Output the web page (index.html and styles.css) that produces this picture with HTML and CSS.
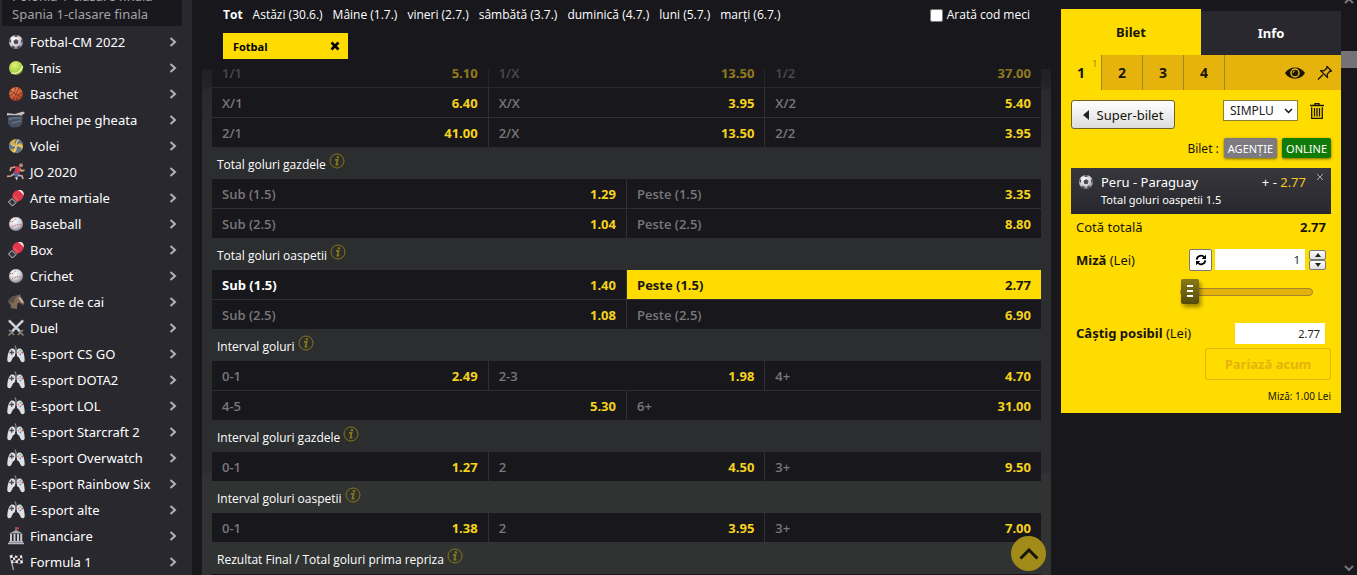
FILE: index.html
```html
<!DOCTYPE html>
<html lang="ro">
<head>
<meta charset="utf-8">
<meta name="viewport" content="width=device-width, initial-scale=1">
<title>Pariuri sportive</title>
<link rel="stylesheet" href="styles.css">
</head>
<body>
<svg class="defs" aria-hidden="true">
  <defs>
    <radialGradient id="gWhite" cx="40%" cy="30%" r="75%"><stop offset="0" stop-color="#fff"/><stop offset=".6" stop-color="#cfcdd4"/><stop offset="1" stop-color="#77757f"/></radialGradient>
    <radialGradient id="gGreen" cx="40%" cy="30%" r="75%"><stop offset="0" stop-color="#e2f27a"/><stop offset=".7" stop-color="#a5cf3e"/><stop offset="1" stop-color="#6c9424"/></radialGradient>
    <radialGradient id="gOrange" cx="40%" cy="30%" r="75%"><stop offset="0" stop-color="#ef8a5a"/><stop offset=".7" stop-color="#c95331"/><stop offset="1" stop-color="#84301d"/></radialGradient>
    <symbol id="football" viewBox="0 0 18 18"><circle cx="9" cy="9" r="7" fill="url(#gWhite)"/><path d="M9 6l2.600 1.900-1 3.100H7.400l-1-3.100zM6 2.900L9 2.100l3 .8L9 4zM2.100 8.600l.9-3 1.200 2-.7 2.600zM15.900 8.600L15 5.600l-1.200 2 .7 2.600zM4.800 14.600l.7-2 2.300 1.400v1.700zM13.200 14.600l-.7-2-2.300 1.400v1.700z" fill="#4a4957"/></symbol>
    <symbol id="tennis" viewBox="0 0 18 18"><circle cx="9" cy="9" r="7" fill="url(#gGreen)"/><path d="M4 14c6 1.400 10.500-1.800 11.700-7" fill="none" stroke="#f0fbb8" stroke-width="1.200"/></symbol>
    <symbol id="basket" viewBox="0 0 18 18"><circle cx="9" cy="9" r="7" fill="url(#gOrange)"/><path d="M3 5.600l12 7M12 2.700L6 15.300M2.200 10.500c4-.5 6.500-3 6-8.300M15.700 8c-4 .3-6.500 3-5.800 7.700" fill="none" stroke="#6e2c1c" stroke-width=".8"/></symbol>
    <symbol id="hockey" viewBox="0 0 18 18"><path d="M1 5l8-1 7 1-1 8-3 3-7 .5-4-3.500z" fill="#465060"/><path d="M2 8.500c4-2 8-2 12-1M5 12l9-2" stroke="#657082" stroke-width="1.500" fill="none"/><path d="M0 2l8 1L16 .5 18 2l-3.500 2.500L0 4.500z" fill="#c4c0bd"/><path d="M1 5h12" stroke="#25272c"/></symbol>
    <symbol id="volley" viewBox="0 0 18 18"><circle cx="9" cy="9" r="7" fill="#dcae40"/><path d="M9 9C7 6 7.500 3.500 10 2c3 .3 5 2 6 5-3-1.500-5-.8-7 2zM9 9c3.500-.5 5 1 5.500 4-2 2.500-4.500 3.300-7 2.800C9.500 14 10 12 9 9zM9 9c-1.500 3-3.500 3.500-6 3.200C1.500 9.500 2 6.500 4 4.200 4 7 5.800 8.500 9 9z" fill="#5f7694"/><path d="M9 9c0-3 .5-5 3-6M9 9c3-1 5-.5 6.500 1.500M9 9c.5 3-.5 5-3 6M9 9C6 9 4 8 3.500 5.500" fill="none" stroke="#f1d377" stroke-width="1.200"/></symbol>
    <symbol id="runner" viewBox="0 0 18 18"><circle cx="14" cy="2.300" r="2" fill="#b88470"/><path d="M7 3l6 1 1.500 3-3 4-5-1 2-4z" fill="#d23e48"/><path d="M6 9.500l6 1 1 3-3 1-4-3z" fill="#3f6db0"/><path d="M8 4L4 5 3 8M13 6l2 2 2.500-1M7 11l-3 2-4 .3M11 12l4 1 1 3" fill="none" stroke="#d6a48e" stroke-width="1.700"/><path d="M8 14l3 .5-1.500 3z" fill="#dedde2"/></symbol>
    <symbol id="glove" viewBox="0 0 18 18"><path d="M5.500 7.500C5 4 8 1.500 11.500 1c4-.4 6 3 5 6-1 4-4.500 5.500-7 5.500z" fill="#e1374a"/><path d="M11 1.200c4.500-1 6.500 2 5.500 5.300-1.500-2.500-3-4-5.500-5.300z" fill="#f6e9e9"/><path d="M5.500 8l2-2 4.500 5-2 2z" fill="#ea4c5b"/><path d="M5 9.500l4 4L5.500 17 1.500 13z" fill="#34333b" stroke="#d6d5d9" stroke-width="1"/></symbol>
    <symbol id="baseball" viewBox="0 0 18 18"><circle cx="9" cy="9" r="7" fill="url(#gWhite)"/><path d="M3 6.500c3 .5 5-.5 6-4M3.500 13c4-3 8-4 12-3" fill="none" stroke="#b8646f" stroke-width="1" stroke-dasharray="1 .8"/></symbol>
    <symbol id="horse" viewBox="0 0 18 18"><path d="M1 9c1.500-4.500 5-6.500 10-6.500L13 1l.5 2.500c2 1.500 2.500 4 4 6.500l-1.500 2-4-2.500c-2 1-2 3-2 6.500l-6.500-1C4.500 13 4 11 1 9z" fill="#806a58"/><path d="M1 9c1.500-4.500 5-6.500 10-6.500-3 2-4 4-4 7.500z" fill="#5a4d45"/><path d="M12 4.500l4 5" stroke="#d5cbc2" stroke-width="1.300"/></symbol>
    <symbol id="swords" viewBox="0 0 18 18"><path d="M2 1.500l11 11M16 1.500l-11 11" stroke="#aeb5c2" stroke-width="2.600"/><path d="M2 1.500l11 11M16 1.500l-11 11" stroke="#eef1f6" stroke-width="1"/><path d="M2 11l5 5M16 11l-5 5M1.500 16.500l3-3M16.500 16.500l-3-3" stroke="#8d8278" stroke-width="1.700"/></symbol>
    <symbol id="pad" viewBox="0 0 18 18"><path d="M9 5V3l-1-2.500" stroke="#8b8a92" fill="none" stroke-width="1.200"/><path d="M7 5h4v4H7z" fill="#5c5b64"/><path d="M4.500 3.500c2.500-.5 4 1 3.800 3.500L8 11l-2 1.500L4 16.500c-1.500 1.500-4 .5-3.700-2C.6 10 1.500 5 4.500 3.500zM13.500 3.500c-2.500-.5-4 1-3.800 3.500L10 11l2 1.500 2 4c1.500 1.500 4 .5 3.700-2C17.400 10 16.500 5 13.500 3.500z" fill="#dfe0e6"/><path d="M4.700 5.300v4.400M2.500 7.500h4.400" stroke="#4a4954" stroke-width="1.300"/><circle cx="13.300" cy="5.600" r=".9" fill="#5eb388"/><circle cx="15.200" cy="7.500" r=".9" fill="#d85252"/><circle cx="11.400" cy="7.500" r=".9" fill="#d78a9a"/><circle cx="13.300" cy="9.400" r=".9" fill="#5d91c6"/></symbol>
    <symbol id="bank" viewBox="0 0 18 18"><path d="M9 0v4" stroke="#999"/><path d="M9 .3h3v2H9z" fill="#c8434b"/><path d="M9 3l7 3.500H2z" fill="#a6a9b2"/><path d="M3 7h2v7H3zM6.500 7h2v7h-2zM10 7h2v7h-2zM13.200 7h2v7h-2z" fill="#c6c8cf"/><path d="M2 14h14v1.500H2zM1 15.800h16v1.500H1z" fill="#b4b6bf"/></symbol>
    <symbol id="flag" viewBox="0 0 18 18"><path d="M3 2.500L6.500 17" stroke="#aaa9b0" stroke-width="1.300"/><path d="M3 2.500C6 0 9 5 15 2l1 8c-5 2-7-2-11.500.5z" fill="#e6e5ea"/><path d="M5.500 2h2.400v2.500H5.500zM10.500 3H13v2.500h-2.500zM3.700 5h2.400v2.300H3.700zM8.200 4.800h2.400v2.500H8.200zM13 5.300h2.300v2H13zM6.200 7.300h2.300v2H6.200zM11 7.500h2.300v2.800H11z" fill="#222127"/></symbol>
    <symbol id="chev" viewBox="0 0 8 10"><path d="M1.500 1L6 5 1.500 9" fill="none" stroke="currentColor" stroke-width="2"/></symbol>
    <symbol id="info" viewBox="0 0 16 16"><circle cx="8" cy="8" r="7" fill="none" stroke="currentColor" stroke-width="1"/><circle cx="8.900" cy="4.300" r="1.200" fill="currentColor"/><path d="M6 6.900h2.600L7.400 11.600h2" fill="none" stroke="currentColor" stroke-width="1.700"/></symbol>
  </defs>
</svg>
<div class="page">
  <nav class="sidebar" aria-label="Sporturi">
    <div class="submenu"><a href="#">Polonia 1-clasare finala</a><a href="#">Spania 1-clasare finala</a></div>
    <a class="sport" href="#"><svg><use href="#football"/></svg><span>Fotbal-CM 2022</span><svg class="chev"><use href="#chev"/></svg></a>
    <a class="sport" href="#"><svg><use href="#tennis"/></svg><span>Tenis</span><svg class="chev"><use href="#chev"/></svg></a>
    <a class="sport" href="#"><svg><use href="#basket"/></svg><span>Baschet</span><svg class="chev"><use href="#chev"/></svg></a>
    <a class="sport" href="#"><svg><use href="#hockey"/></svg><span>Hochei pe gheata</span><svg class="chev"><use href="#chev"/></svg></a>
    <a class="sport" href="#"><svg><use href="#volley"/></svg><span>Volei</span><svg class="chev"><use href="#chev"/></svg></a>
    <a class="sport" href="#"><svg><use href="#runner"/></svg><span>JO 2020</span><svg class="chev"><use href="#chev"/></svg></a>
    <a class="sport" href="#"><svg><use href="#glove"/></svg><span>Arte martiale</span><svg class="chev"><use href="#chev"/></svg></a>
    <a class="sport" href="#"><svg><use href="#baseball"/></svg><span>Baseball</span><svg class="chev"><use href="#chev"/></svg></a>
    <a class="sport" href="#"><svg><use href="#glove"/></svg><span>Box</span><svg class="chev"><use href="#chev"/></svg></a>
    <a class="sport" href="#"><svg><use href="#baseball"/></svg><span>Crichet</span><svg class="chev"><use href="#chev"/></svg></a>
    <a class="sport" href="#"><svg><use href="#horse"/></svg><span>Curse de cai</span><svg class="chev"><use href="#chev"/></svg></a>
    <a class="sport" href="#"><svg><use href="#swords"/></svg><span>Duel</span><svg class="chev"><use href="#chev"/></svg></a>
    <a class="sport" href="#"><svg><use href="#pad"/></svg><span>E-sport CS GO</span><svg class="chev"><use href="#chev"/></svg></a>
    <a class="sport" href="#"><svg><use href="#pad"/></svg><span>E-sport DOTA2</span><svg class="chev"><use href="#chev"/></svg></a>
    <a class="sport" href="#"><svg><use href="#pad"/></svg><span>E-sport LOL</span><svg class="chev"><use href="#chev"/></svg></a>
    <a class="sport" href="#"><svg><use href="#pad"/></svg><span>E-sport Starcraft 2</span><svg class="chev"><use href="#chev"/></svg></a>
    <a class="sport" href="#"><svg><use href="#pad"/></svg><span>E-sport Overwatch</span><svg class="chev"><use href="#chev"/></svg></a>
    <a class="sport" href="#"><svg><use href="#pad"/></svg><span>E-sport Rainbow Six</span><svg class="chev"><use href="#chev"/></svg></a>
    <a class="sport" href="#"><svg><use href="#pad"/></svg><span>E-sport alte</span><svg class="chev"><use href="#chev"/></svg></a>
    <a class="sport" href="#"><svg><use href="#bank"/></svg><span>Financiare</span><svg class="chev"><use href="#chev"/></svg></a>
    <a class="sport" href="#"><svg><use href="#flag"/></svg><span>Formula 1</span><svg class="chev"><use href="#chev"/></svg></a>
  </nav>

  <main class="offer">
    <header class="filters">
      <div class="days">
        <a class="on" href="#">Tot</a><a href="#">Astăzi (30.6.)</a><a href="#">Mâine (1.7.)</a><a href="#">vineri (2.7.)</a><a href="#">sâmbătă (3.7.)</a><a href="#">duminică (4.7.)</a><a href="#">luni (5.7.)</a><a href="#">marți (6.7.)</a>
        <label class="code"><input type="checkbox">Arată cod meci</label>
      </div>
      <button class="chip" type="button">Fotbal<svg viewBox="0 0 10 10"><path d="M1.500 1.500l7 7M8.500 1.500l-7 7" stroke="#000" stroke-width="2.600"/></svg></button>
    </header>
    <div class="list">
      <div class="content">
        <div class="odds three">
          <button><span>1/1</span><b>5.10</b></button><button><span>1/X</span><b>13.50</b></button><button><span>1/2</span><b>37.00</b></button>
          <button><span>X/1</span><b>6.40</b></button><button><span>X/X</span><b>3.95</b></button><button><span>X/2</span><b>5.40</b></button>
          <button><span>2/1</span><b>41.00</b></button><button><span>2/X</span><b>13.50</b></button><button><span>2/2</span><b>3.95</b></button>
        </div>
        <h3>Total goluri gazdele<svg><use href="#info"/></svg></h3>
        <div class="odds two">
          <button><span>Sub (1.5)</span><b>1.29</b></button><button><span>Peste (1.5)</span><b>3.35</b></button>
          <button><span>Sub (2.5)</span><b>1.04</b></button><button><span>Peste (2.5)</span><b>8.80</b></button>
        </div>
        <h3>Total goluri oaspetii<svg><use href="#info"/></svg></h3>
        <div class="odds two">
          <button class="active"><span>Sub (1.5)</span><b>1.40</b></button><button class="picked"><span>Peste (1.5)</span><b>2.77</b></button>
          <button><span>Sub (2.5)</span><b>1.08</b></button><button><span>Peste (2.5)</span><b>6.90</b></button>
        </div>
        <h3>Interval goluri<svg><use href="#info"/></svg></h3>
        <div class="odds three">
          <button><span>0-1</span><b>2.49</b></button><button><span>2-3</span><b>1.98</b></button><button><span>4+</span><b>4.70</b></button>
        </div>
        <div class="odds two next">
          <button><span>4-5</span><b>5.30</b></button><button><span>6+</span><b>31.00</b></button>
        </div>
        <h3>Interval goluri gazdele<svg><use href="#info"/></svg></h3>
        <div class="odds three">
          <button><span>0-1</span><b>1.27</b></button><button><span>2</span><b>4.50</b></button><button><span>3+</span><b>9.50</b></button>
        </div>
        <h3>Interval goluri oaspetii<svg><use href="#info"/></svg></h3>
        <div class="odds three">
          <button><span>0-1</span><b>1.38</b></button><button><span>2</span><b>3.95</b></button><button><span>3+</span><b>7.00</b></button>
        </div>
        <h3>Rezultat Final / Total goluri prima repriza<svg><use href="#info"/></svg></h3>
        <div class="odds three"></div>
      </div>
      <button class="totop" type="button" aria-label="Sus"><svg viewBox="0 0 20 12"><path d="M1.500 10.500L10 2l8.500 8.500" fill="none" stroke="#17160c" stroke-width="3"/></svg></button>
    </div>
  </main>

  <aside class="side">
    <div class="tabs"><button class="tab on" type="button">Bilet</button><button class="tab" type="button">Info</button></div>
    <div class="slips">
      <button class="slip on" type="button">1<sup>1</sup></button><button class="slip" type="button">2</button><button class="slip" type="button">3</button><button class="slip" type="button">4</button>
      <div class="tools">
        <button class="icon" type="button" aria-label="Vezi"><svg class="eye" viewBox="0 0 20 12"><path d="M0 6C4-1.500 16-1.500 20 6 16 13.500 4 13.500 0 6z" fill="#1a1508"/><circle cx="10" cy="6" r="4" fill="none" stroke="#e6b20c" stroke-width="1.500"/><path d="M8 6a2 2 0 0 1 2-2" fill="none" stroke="#e6b20c"/></svg></button>
        <button class="icon" type="button" aria-label="Fixează"><svg class="pin" viewBox="0 0 16 16"><path d="M10 1.500L14.500 6l-2 .5-2.300 2.600.3 3.400L3.500 5.600l3.400.2 2.700-2.300zM6 9.500L1 14.500" fill="none" stroke="#1a1508" stroke-width="1.300" stroke-linejoin="round"/></svg></button>
      </div>
    </div>
    <form class="ticket">
      <div class="line top">
        <button class="super" type="button"><svg viewBox="0 0 6 10"><path d="M6 0v10L0 5z" fill="#222"/></svg>Super-bilet</button>
        <div class="kind">
          <span class="pick"><select aria-label="Tip bilet"><option>SIMPLU</option></select><svg viewBox="0 0 10 7"><path d="M1 1.200l4 4 4-4" fill="none" stroke="#111" stroke-width="1.800"/></svg></span>
          <button class="icon" type="button" aria-label="Șterge"><svg class="trash" viewBox="0 0 14 16"><path d="M0 2.500h14M5 2V.700h4V2" fill="none" stroke="#1a1508" stroke-width="1.300"/><path d="M1.700 4.200v11.100h10.600V4.200M4.500 5v8.500M7 5v8.500M9.500 5v8.500" fill="none" stroke="#1a1508" stroke-width="1.300"/></svg></button>
        </div>
      </div>
      <div class="line place"><span>Bilet :</span><button class="tag" type="button">AGENȚIE</button><button class="tag green" type="button">ONLINE</button></div>
      <div class="bet">
        <svg class="ball"><use href="#football"/></svg>
        <div class="match"><span>Peru - Paraguay</span><small>Total goluri oaspetii 1.5</small></div>
        <div class="odd">+ - <span>2.77</span></div>
        <button class="close" type="button" aria-label="Elimină"><svg viewBox="0 0 8 8"><path d="M1 1l6 6M7 1L1 7" stroke="#aaa9ae"/></svg></button>
      </div>
      <div class="line total"><span>Cotă totală</span><b>2.77</b></div>
      <div class="line stake">
        <label for="stake"><b>Miză</b> (Lei)</label>
        <div class="entry">
          <button class="refresh" type="button" aria-label="Resetează"><svg viewBox="0 0 14 14"><path d="M2 6.500A5 5 0 0 1 11 4M12 7.500A5 5 0 0 1 3 10" fill="none" stroke="#000" stroke-width="2"/><path d="M12.800.800v5h-5zM1.200 13.200v-5h5z"/></svg></button>
          <input id="stake" class="field" type="text" value="1">
          <span class="spin"><button type="button" aria-label="Mai mult"><svg viewBox="0 0 6 4"><path d="M3 0l3 4H0z" fill="#222"/></svg></button><button type="button" aria-label="Mai puțin"><svg viewBox="0 0 6 4"><path d="M3 4l3-4H0z" fill="#222"/></svg></button></span>
        </div>
      </div>
      <div class="line slide"><input type="range" min="1" max="100" value="1" aria-label="Miză"></div>
      <div class="line win"><label for="win"><b>Câștig posibil</b> (Lei)</label><input id="win" class="field" type="text" value="2.77" readonly></div>
      <div class="line send"><button class="bet-now" type="button">Pariază acum</button></div>
      <p class="note">Miză: 1.00 Lei</p>
    </form>
  </aside>
  <div class="scrollbar" aria-hidden="true">
    <svg viewBox="0 0 10 6"><path d="M1 5l4-4 4 4" fill="none" stroke="#77767a" stroke-width="2"/></svg>
    <div class="thumb"></div>
    <svg class="down" viewBox="0 0 10 6"><path d="M1 1l4 4 4-4" fill="none" stroke="#77767a" stroke-width="2"/></svg>
  </div>
</div>
</body>
</html>
```
FILE: styles.css
```css
* { box-sizing: border-box; }
body { margin: 0; background: #18171c; color: #fff; font-family: "Noto Sans", sans-serif; font-size: 13px; }
button { margin: 0; padding: 0; border: 0; background: none; color: inherit; font: inherit; cursor: pointer; }
a { color: inherit; text-decoration: none; }
svg { display: block; flex: none; }
.defs { position: absolute; width: 0; height: 0; }
.page { display: flex; height: 100vh; overflow: hidden; }

/* Sports menu */
.sidebar { flex: none; width: 192px; background: #29282e; overflow: hidden; }
.submenu { display: flex; flex-direction: column; justify-content: flex-end; height: 26px; margin: 0 10px 3px 2px; padding: 0 10px 3px; overflow: hidden; background: #19181d; color: #a3a2a6; line-height: 18px; }
.submenu a { flex: none; }
.sport { display: flex; align-items: center; gap: 5px; height: 26px; padding: 0 15px 0 7px; }
.sport svg { width: 18px; height: 18px; }
.sport span { flex: 1; white-space: nowrap; }
.sport .chev { width: 8px; height: 10px; color: #b3b2b6; }

/* Offer */
.offer { flex: 1; min-width: 0; display: flex; flex-direction: column; margin: 0 10px; font-family: "Open Sans", sans-serif; }
.filters { flex: none; height: 69px; padding: 5px 21px 0; font-size: 12px; }
.days { display: flex; gap: 10px; height: 20px; line-height: 20px; white-space: nowrap; }
.days .on { font-weight: 700; }
.code { display: flex; align-items: center; gap: 4px; margin-left: auto; }
.code input { width: 13px; height: 13px; margin: 0; }
.chip { display: flex; align-items: center; justify-content: space-between; width: 125px; height: 26px; margin-top: 8px; padding: 0 8px 0 10px; background: #ffdc00; color: #000; font-size: 11px; font-weight: 700; }
.chip svg { width: 10px; height: 10px; }
.list { position: relative; flex: 1; min-height: 0; overflow: hidden; background: linear-gradient(#29292c, #2b2d2f 80px, #2b2d2f 404px, #313333 404px); }
.list::before { content: ""; position: absolute; inset: 0 0 auto; height: 20px; background: linear-gradient(#18171c88, #18171c44); }
.content { margin-top: -11px; padding: 0 10px; }
.odds { display: grid; gap: 1px; min-height: 29px; background: #303034; }
.odds:empty { background: #18171c; }
.odds.next { margin-top: 1px; }
.three { grid-template-columns: repeat(3, 1fr); }
.two { grid-template-columns: repeat(2, 1fr); }
.odds button { display: flex; align-items: center; justify-content: space-between; height: 29px; padding: 0 10px; background: #18171c; color: #78777b; font-weight: 600; }
.odds b { color: #f5d21c; font-weight: 700; }
.odds .active { color: #fff; font-weight: 700; }
.odds .picked { background: #ffdc00; color: #18171c; font-weight: 700; }
.odds .picked b { color: inherit; }
h3 { display: flex; align-items: center; gap: 3px; height: 32px; margin: 0; padding: 3px 5px 0; font-size: 12px; font-weight: 400; }
h3 svg { width: 16px; height: 16px; margin-bottom: 8px; color: #877717; }
.totop { position: absolute; right: 5px; bottom: 4px; display: grid; place-items: center; width: 35px; height: 35px; border-radius: 50%; background: #a18c1a; }
.totop svg { width: 20px; height: 12px; }

/* Betting slip */
.side { flex: none; width: 280px; padding-top: 9px; color: #18150a; }
.tabs { display: flex; align-items: flex-end; height: 46px; }
.tab { flex: 1; height: 44px; background: #29282e; color: #fff; font-weight: 700; }
.tab.on { height: 46px; background: #ffdc00; color: #18150a; }
.slips { display: flex; height: 35px; background: #e6b20c; }
.slip { position: relative; width: 41px; border-right: 1px solid #a0852a; font-size: 14px; font-weight: 700; }
.slip.on { background: #ffdc00; }
.slip sup { position: absolute; top: 4px; right: 4px; color: #8d7a18; font-size: 8px; line-height: 10px; font-weight: 400; }
.tools { display: flex; flex: 1; align-items: center; justify-content: flex-end; gap: 12px; padding-right: 8px; }
.eye { width: 20px; height: 12px; }
.pin { width: 16px; height: 16px; }
.ticket { padding: 10px 10px 9px; background: #ffdc00; }
.line { display: flex; align-items: center; justify-content: space-between; }
.top { align-items: flex-start; height: 38px; }
.super { display: flex; align-items: center; justify-content: center; gap: 8px; width: 104px; height: 29px; border: 1px solid #6c6420; border-radius: 3px; background: linear-gradient(#fff, #dcdcdc); }
.super svg { width: 6px; height: 10px; }
.kind { display: flex; align-items: center; gap: 12px; padding-right: 7px; }
.pick { position: relative; }
.pick select { display: block; appearance: none; width: 75px; height: 21px; padding: 0 6px; border: 1px solid #8b8230; border-radius: 0; background: #fff; color: #222; font: 12px/18px "Noto Sans", sans-serif; }
.pick svg { position: absolute; top: 8px; right: 5px; width: 9px; height: 6px; pointer-events: none; }
.trash { width: 14px; height: 16px; }
.place { justify-content: flex-end; gap: 5px; height: 20px; margin-bottom: 10px; font-size: 12px; }
.tag { height: 20px; padding: 0 4px; border-radius: 2px; background: #7d7a80; color: #fff; font-size: 11px; box-shadow: 0 1px 3px #0008; }
.tag.green { background: #107b07; }
.bet { display: flex; align-items: flex-start; height: 46px; padding: 5px 7px 5px 6px; background: linear-gradient(#38373d, #28272d); color: #fff; line-height: 18px; }
.ball { width: 18px; height: 18px; }
.match { display: flex; flex: 1; flex-direction: column; padding-left: 6px; }
.match small { font-size: 11px; }
.odd span { color: #f2cc1c; }
.close { margin-left: 10px; }
.close svg { width: 8px; height: 8px; }
.total, .stake, .win { padding: 0 5px; }
.total { height: 26px; }
.stake { height: 39px; }
.entry { display: flex; align-items: center; gap: 3px; }
.refresh { display: grid; place-items: center; width: 23px; height: 22px; border: 1px solid #777; border-radius: 2px; background: #fff; }
.refresh svg { width: 12px; height: 12px; }
.field { width: 90px; height: 21px; margin: 0; padding: 0 5px; border: 0; background: #fff; color: #222; font: 11px "Noto Sans", sans-serif; text-align: right; }
.spin { display: grid; width: 17px; margin-left: 1px; }
.spin button { display: grid; place-items: center; height: 10px; border: 1px solid #777; border-radius: 2px; background: linear-gradient(#fff, #ddd); }
.spin svg { width: 6px; height: 4px; }
.slide { justify-content: flex-end; height: 26px; padding-right: 18px; }
.slide input { appearance: none; width: 133px; height: 26px; margin: 0; background: none; }
.slide input::-webkit-slider-runnable-track { height: 8px; border: 1px solid #a0852a; border-radius: 4px; background: #e6b20c; }
.slide input::-webkit-slider-thumb { appearance: none; width: 18px; height: 25px; margin-top: -10px; border-radius: 2px; background: linear-gradient(#fff, #fff) 6px 6px / 6px 2px no-repeat, linear-gradient(#fff, #fff) 6px 11px / 6px 2px no-repeat, linear-gradient(#fff, #fff) 6px 16px / 6px 2px no-repeat, linear-gradient(#8a7a14, #554b0c); box-shadow: 2px 3px 4px #0006; }
.win { height: 51px; padding: 5px 6px 0 5px; }
.send { justify-content: flex-end; margin-top: -8px; }
.bet-now { width: 126px; height: 32px; border: 1px solid #e6b40c; border-radius: 3px; color: #e6b40c; font-weight: 700; }
.note { margin: 8px 0 0; font-size: 10px; line-height: 16px; text-align: right; }

/* Page scroll track */
.scrollbar { display: flex; flex: none; flex-direction: column; align-items: center; width: 16px; padding-bottom: 4px; }
.scrollbar svg { width: 10px; height: 6px; margin-top: -2px; }
.thumb { width: 16px; height: 17px; margin-top: 47px; background: #737277; }
.scrollbar .down { margin-top: auto; }
```
